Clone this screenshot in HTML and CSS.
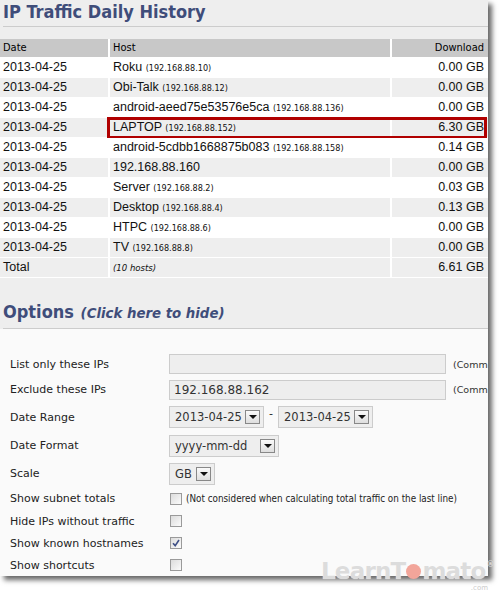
FILE: index.html
```html
<!DOCTYPE html>
<html>
<head>
<meta charset="utf-8">
<link rel="stylesheet" href="styles.css">
</head>
<body>
<div class="panel">
  <h1 class="title">IP Traffic Daily History</h1>
  <div class="rule"></div>
  <div class="table">
    <div class="row head"><div class="c">Date</div><div class="c">Host</div><div class="c dl">Download</div></div>
    <div class="row odd"><div class="c">2013-04-25</div><div class="c">Roku <span class="ip">(192.168.88.10)</span></div><div class="c dl">0.00 GB</div></div>
    <div class="row"><div class="c">2013-04-25</div><div class="c">Obi-Talk <span class="ip">(192.168.88.12)</span></div><div class="c dl">0.00 GB</div></div>
    <div class="row odd"><div class="c">2013-04-25</div><div class="c">android-aeed75e53576e5ca <span class="ip">(192.168.88.136)</span></div><div class="c dl">0.00 GB</div></div>
    <div class="row hl"><div class="c">2013-04-25</div><div class="c">LAPTOP <span class="ip">(192.168.88.152)</span></div><div class="c dl">6.30 GB</div></div>
    <div class="row odd"><div class="c">2013-04-25</div><div class="c">android-5cdbb1668875b083 <span class="ip">(192.168.88.158)</span></div><div class="c dl">0.14 GB</div></div>
    <div class="row"><div class="c">2013-04-25</div><div class="c">192.168.88.160</div><div class="c dl">0.00 GB</div></div>
    <div class="row odd"><div class="c">2013-04-25</div><div class="c">Server <span class="ip">(192.168.88.2)</span></div><div class="c dl">0.03 GB</div></div>
    <div class="row"><div class="c">2013-04-25</div><div class="c">Desktop <span class="ip">(192.168.88.4)</span></div><div class="c dl">0.13 GB</div></div>
    <div class="row odd"><div class="c">2013-04-25</div><div class="c">HTPC <span class="ip">(192.168.88.6)</span></div><div class="c dl">0.00 GB</div></div>
    <div class="row"><div class="c">2013-04-25</div><div class="c">TV <span class="ip">(192.168.88.8)</span></div><div class="c dl">0.00 GB</div></div>
    <div class="row"><div class="c">Total</div><div class="c"><span class="hosts">(10 hosts)</span></div><div class="c dl">6.61 GB</div></div>
  </div>
  <h2 class="options">Options <em>(Click here to hide)</em></h2>
  <div class="rule"></div>
  <div class="form">
    <div class="frow r1"><span class="lbl">List only these IPs</span><span class="txt"></span><span class="note">(Comm</span></div>
    <div class="frow r2"><span class="lbl">Exclude these IPs</span><span class="txt">192.168.88.162</span><span class="note">(Comm</span></div>
    <div class="frow r3"><span class="lbl">Date Range</span><span class="sel w95">2013-04-25<i class="btn"></i></span><span class="dash">-</span><span class="sel w95">2013-04-25<i class="btn"></i></span></div>
    <div class="frow r4"><span class="lbl">Date Format</span><span class="sel w110">yyyy-mm-dd<i class="btn"></i></span></div>
    <div class="frow r5"><span class="lbl">Scale</span><span class="sel w46">GB<i class="btn"></i></span></div>
    <div class="frow r6"><span class="lbl">Show subnet totals</span><span class="cb"></span><span class="note2">(Not considered when calculating total traffic on the last line)</span></div>
    <div class="frow r7"><span class="lbl">Hide IPs without traffic</span><span class="cb"></span></div>
    <div class="frow r8"><span class="lbl">Show known hostnames</span><span class="cb on"><svg viewBox="0 0 10 10" width="10" height="10"><path d="M2 5.2 L4.2 7.6 L8 2" fill="none" stroke="#3e4f86" stroke-width="1.6"/></svg></span></div>
    <div class="frow r9"><span class="lbl">Show shortcuts</span><span class="cb"></span></div>
  </div>
</div>
<div class="watermark">
  <div class="wmline"><span class="wm">LearnT<span class="tom"></span>mato</span><span class="reg">®</span></div>
  <div class="com">.com</div>
</div>
</body>
</html>
```
FILE: styles.css
```css
html, body {
  margin: 0;
  padding: 0;
}
body {
  width: 502px;
  height: 592px;
  background: #ffffff;
  position: relative;
  overflow: hidden;
  font-family: "Liberation Sans", Arial, sans-serif;
}
.panel {
  width: 488px;
  height: 576px;
  background: #eeeeee;
  box-shadow: 4px 4px 5px rgba(0, 0, 0, 0.6);
  overflow: hidden;
  display: flex;
  flex-direction: column;
}
.title {
  margin: 0;
  height: 26px;
  padding-left: 3px;
  font-family: "DejaVu Sans Condensed", "DejaVu Sans", sans-serif;
  font-weight: bold;
  font-size: 18px;
  line-height: 24px;
  color: #3f4d7a;
  white-space: nowrap;
}
.rule {
  height: 1px;
  flex: none;
  background: #cccccc;
  margin-left: 3px;
}
.table {
  margin-top: 12px;
}
.row {
  display: grid;
  grid-template-columns: 108px 282px 1fr;
  height: 20px;
  background: #eeeeee;
  position: relative;
}
.row.odd {
  background: #ffffff;
}
.row.head {
  height: 19px;
  background: #c8c8c8;
}
.c {
  box-sizing: border-box;
  border-bottom: 1px solid #ffffff;
  padding: 0 3px;
  font-size: 12.5px;
  line-height: 19px;
  color: #111111;
  white-space: nowrap;
  overflow: hidden;
}
.c + .c {
  border-left: 2px solid #ffffff;
}
.head .c {
  font-family: "DejaVu Sans Condensed", "DejaVu Sans", sans-serif;
  font-size: 11px;
  line-height: 18px;
  color: #000000;
}
.dl {
  text-align: right;
  padding-right: 4px;
}
.ip {
  font-family: "DejaVu Sans Condensed", "DejaVu Sans", sans-serif;
  font-size: 9px;
}
.hosts {
  font-family: "DejaVu Sans Condensed", "DejaVu Sans", sans-serif;
  font-style: italic;
  font-size: 9.5px;
}
.row.hl::after {
  content: "";
  position: absolute;
  left: 107px;
  right: 1px;
  top: -1px;
  bottom: -1px;
  border: 3px solid #b00000;
}
.options {
  margin: 0;
  padding: 22px 0 0 3px;
  height: 28px;
  font-family: "DejaVu Sans Condensed", "DejaVu Sans", sans-serif;
  font-weight: bold;
  font-size: 18px;
  line-height: 24px;
  color: #3f4d7a;
  white-space: nowrap;
}
.options em {
  font-size: 14.8px;
  margin-left: 1px;
}
.form {
  flex: 1;
  background: #fafafa;
  padding-top: 23px;
  font-family: "DejaVu Sans", sans-serif;
  font-size: 11px;
  color: #222222;
}
.frow {
  display: flex;
  align-items: center;
  white-space: nowrap;
}
.r1 { height: 24px; }
.r2 { height: 27px; }
.r3 { height: 28px; }
.r4 { height: 29px; }
.r5 { height: 27px; }
.r6 { height: 23px; }
.r7, .r8, .r9 { height: 22px; }
.lbl {
  width: 159px;
  padding-left: 10px;
  flex: none;
}
.txt {
  box-sizing: border-box;
  width: 277px;
  height: 20px;
  flex: none;
  border: 1px solid #cccccc;
  background: #eeeeee;
  padding-left: 4px;
  font-size: 12px;
  line-height: 18px;
  color: #333333;
}
.note {
  margin-left: 7px;
  font-size: 9.5px;
  color: #333333;
}
.sel {
  box-sizing: border-box;
  height: 22px;
  flex: none;
  border: 1px solid #cccccc;
  background: #eeeeee;
  padding-left: 5px;
  padding-right: 3px;
  font-size: 11.5px;
  color: #333333;
  display: flex;
  align-items: center;
  justify-content: space-between;
}
.w95 { width: 95px; }
.w110 { width: 110px; }
.w46 { width: 46px; }
.btn {
  box-sizing: border-box;
  width: 15px;
  height: 14px;
  border: 1px solid #888888;
  background: linear-gradient(#fafafa, #dedede);
  position: relative;
  flex: none;
}
.btn::after {
  content: "";
  position: absolute;
  left: 3px;
  top: 4px;
  border-left: 4px solid transparent;
  border-right: 4px solid transparent;
  border-top: 4px solid #111111;
}
.dash {
  width: 14px;
  text-align: center;
  font-size: 11px;
  margin-top: -8px;
}
.cb {
  box-sizing: border-box;
  width: 12px;
  height: 12px;
  margin-left: 1px;
  flex: none;
  border: 1px solid #9a9a9a;
  background: linear-gradient(135deg, #dcdcdc, #fbfbfb);
  display: flex;
  align-items: center;
  justify-content: center;
}
.note2 {
  margin-left: 4px;
  font-family: "DejaVu Sans Condensed", "DejaVu Sans", sans-serif;
  font-size: 9.8px;
  color: #222222;
}
.watermark {
  position: absolute;
  left: 321px;
  top: 558px;
  width: 181px;
  height: 34px;
  font-family: "DejaVu Sans", sans-serif;
  font-weight: bold;
  color: #dcdcdc;
  white-space: nowrap;
}
.wmline {
  display: flex;
  align-items: flex-start;
  height: 27px;
}
.wm {
  flex: none;
  font-size: 23px;
  letter-spacing: -0.8px;
  line-height: 27px;
  text-shadow: 0 0 1px #ffffff;
}
.tom {
  display: inline-block;
  width: 15px;
  height: 15px;
  border-radius: 50%;
  background: #f2a59a;
  margin: 0 1px;
}
.reg {
  flex: none;
  font-size: 8px;
  line-height: 10px;
  margin-left: 1px;
  margin-top: 2px;
}
.com {
  text-align: right;
  padding-right: 14px;
  font-size: 7px;
  line-height: 7px;
  font-weight: normal;
  color: #cccccc;
}
```
